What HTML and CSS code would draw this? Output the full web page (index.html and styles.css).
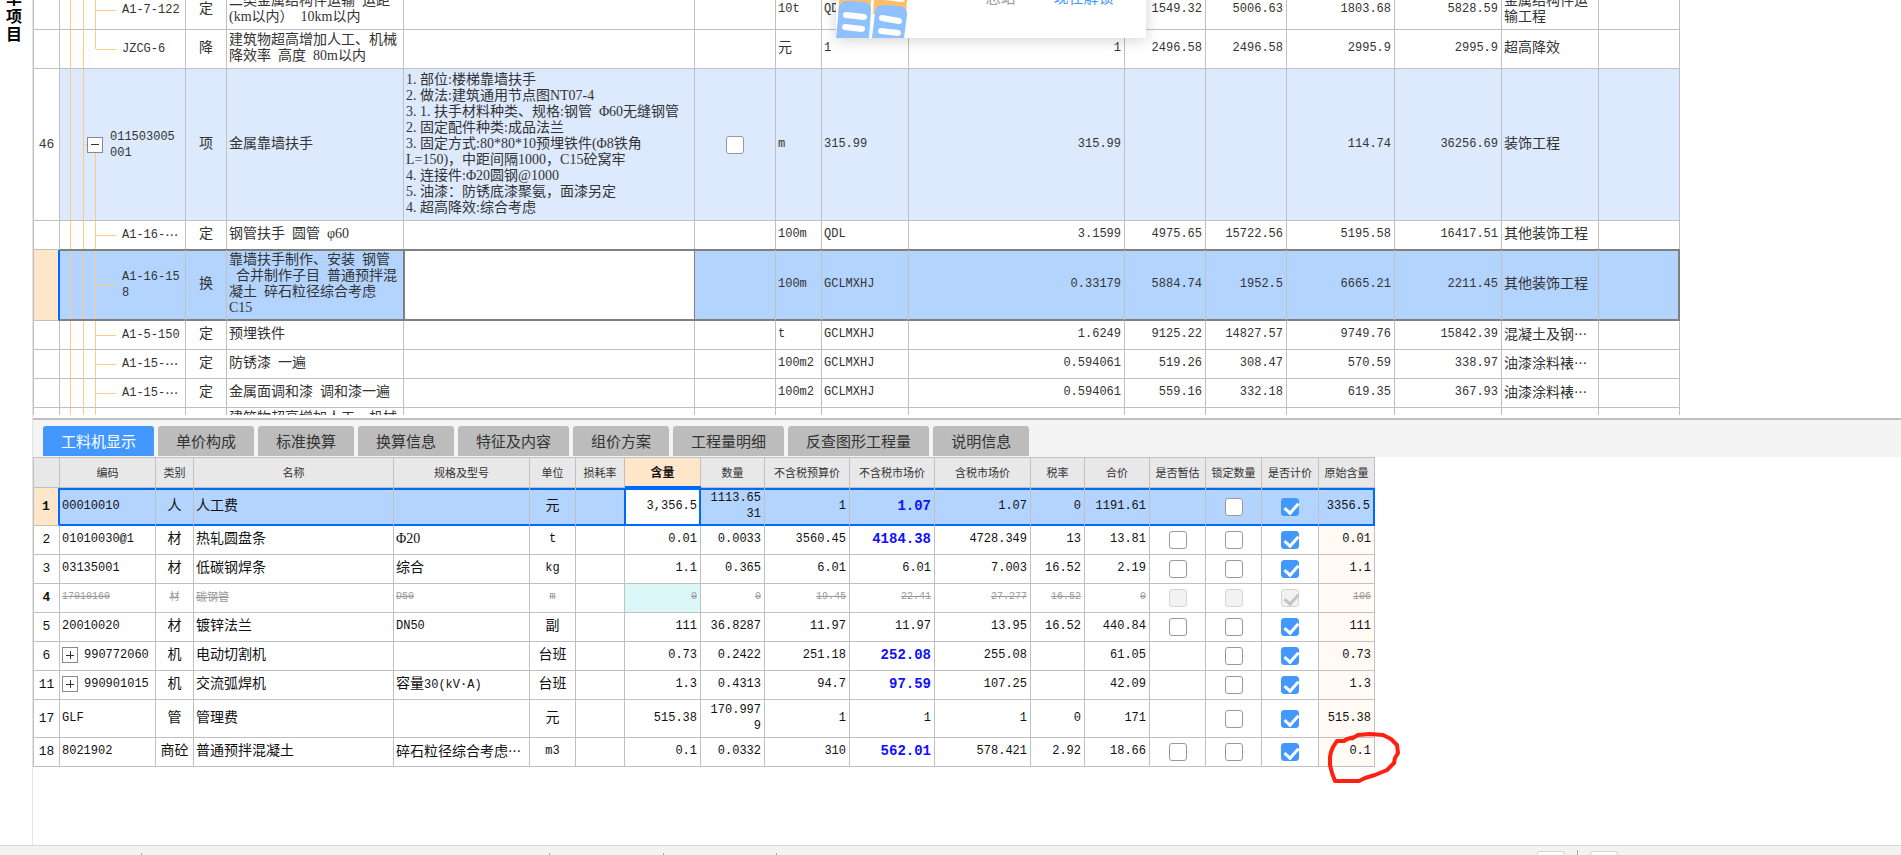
FILE: index.html
```
<!DOCTYPE html>
<html lang="zh-CN">
<head>
  <meta charset="UTF-8">
  <meta name="viewport" content="width=device-width, initial-scale=1.0">
  <title>工程计价</title>
  <link rel="stylesheet" href="styles.css">
</head>
<body>
  <div class="workspace">
    <!-- 左侧竖排导航 -->
    <aside class="side-nav"><a href="#project">单项目</a></aside>

    <main class="panes">
      <!-- 清单定额表 -->
      <section class="bill-pane">
        <table class="grid bill">
          <colgroup>
            <col class="w-27"><col class="w-126"><col class="w-41"><col class="w-177"><col class="w-291">
            <col class="w-81"><col class="w-46"><col class="w-87"><col class="w-216"><col class="w-81">
            <col class="w-81"><col class="w-108"><col class="w-107"><col class="w-97"><col class="w-81">
          </colgroup>
          <tbody>
            <tr class="h-39">
              <th></th>
              <td class="tree"><div class="leaf">A1-7-122</div></td>
              <td class="mid">定</td>
              <td>二类金属结构件运输&nbsp; 运距<br>(km以内）&nbsp; 10km以内</td>
              <td></td><td></td>
              <td class="code">10t</td><td class="code">QDL</td><td class="num"></td>
              <td class="num">1549.32</td><td class="num">5006.63</td><td class="num">1803.68</td><td class="num">5828.59</td>
              <td>金属结构件运<br>输工程</td><td></td>
            </tr>
            <tr class="h-39">
              <th></th>
              <td class="tree last"><div class="leaf">JZCG-6</div></td>
              <td class="mid">降</td>
              <td>建筑物超高增加人工、机械<br>降效率&nbsp; 高度&nbsp; 80m以内</td>
              <td></td><td></td>
              <td>元</td><td class="code">1</td><td class="num">1</td>
              <td class="num">2496.58</td><td class="num">2496.58</td><td class="num">2995.9</td><td class="num">2995.9</td>
              <td>超高降效</td><td></td>
            </tr>
            <tr class="h-152 item">
              <th>46</th>
              <td class="tree parent"><div class="node"><button class="toggle minus" aria-label="收起"></button><span>011503005<br>001</span></div></td>
              <td class="mid">项</td>
              <td>金属靠墙扶手</td>
              <td>1. 部位:楼梯靠墙扶手<br>2. 做法:建筑通用节点图NT07-4<br>3. 1. 扶手材料种类、规格:钢管&nbsp; Φ60无缝钢管<br>2. 固定配件种类:成品法兰<br>3. 固定方式:80*80*10预埋铁件(Φ8铁角<br>L=150)，中距间隔1000，C15砼窝牢<br>4. 连接件:Φ20圆钢@1000<br>5. 油漆：防锈底漆聚氨，面漆另定<br>4. 超高降效:综合考虑</td>
              <td class="mid"><input type="checkbox" aria-label="46 主要清单"></td>
              <td class="code">m</td><td class="code">315.99</td><td class="num">315.99</td>
              <td></td><td></td><td class="num">114.74</td><td class="num">36256.69</td>
              <td>装饰工程</td><td></td>
            </tr>
            <tr class="h-29">
              <th></th>
              <td class="tree"><div class="leaf">A1-16-<span class="more">…</span></div></td>
              <td class="mid">定</td>
              <td>钢管扶手&nbsp; 圆管&nbsp; φ60</td>
              <td></td><td></td>
              <td class="code">100m</td><td class="code">QDL</td><td class="num">3.1599</td>
              <td class="num">4975.65</td><td class="num">15722.56</td><td class="num">5195.58</td><td class="num">16417.51</td>
              <td>其他装饰工程</td><td></td>
            </tr>
            <tr class="h-71 current">
              <th></th>
              <td class="tree"><div class="leaf"><span>A1-16-15<br>8</span></div></td>
              <td class="mid">换</td>
              <td>靠墙扶手制作、安装&nbsp; 钢管<br>&nbsp; 合并制作子目&nbsp; 普通预拌混<br>凝土&nbsp; 碎石粒径综合考虑<br>C15</td>
              <td class="focus"></td><td></td>
              <td class="code">100m</td><td class="code">GCLMXHJ</td><td class="num">0.33179</td>
              <td class="num">5884.74</td><td class="num">1952.5</td><td class="num">6665.21</td><td class="num">2211.45</td>
              <td>其他装饰工程</td><td></td>
            </tr>
            <tr class="h-29">
              <th></th>
              <td class="tree"><div class="leaf">A1-5-150</div></td>
              <td class="mid">定</td>
              <td>预埋铁件</td>
              <td></td><td></td>
              <td class="code">t</td><td class="code">GCLMXHJ</td><td class="num">1.6249</td>
              <td class="num">9125.22</td><td class="num">14827.57</td><td class="num">9749.76</td><td class="num">15842.39</td>
              <td>混凝土及钢<span class="more">…</span></td><td></td>
            </tr>
            <tr class="h-29">
              <th></th>
              <td class="tree"><div class="leaf">A1-15-<span class="more">…</span></div></td>
              <td class="mid">定</td>
              <td>防锈漆&nbsp; 一遍</td>
              <td></td><td></td>
              <td class="code">100m2</td><td class="code">GCLMXHJ</td><td class="num">0.594061</td>
              <td class="num">519.26</td><td class="num">308.47</td><td class="num">570.59</td><td class="num">338.97</td>
              <td>油漆涂料裱<span class="more">…</span></td><td></td>
            </tr>
            <tr class="h-29">
              <th></th>
              <td class="tree"><div class="leaf">A1-15-<span class="more">…</span></div></td>
              <td class="mid">定</td>
              <td>金属面调和漆&nbsp; 调和漆一遍</td>
              <td></td><td></td>
              <td class="code">100m2</td><td class="code">GCLMXHJ</td><td class="num">0.594061</td>
              <td class="num">559.16</td><td class="num">332.18</td><td class="num">619.35</td><td class="num">367.93</td>
              <td>油漆涂料裱<span class="more">…</span></td><td></td>
            </tr>
            <tr class="h-39">
              <th></th>
              <td class="tree"></td>
              <td></td>
              <td>建筑物超高增加人工、机械<br>降效率&nbsp; 高度&nbsp; 80m以内</td>
              <td></td><td></td><td></td><td></td><td></td><td></td><td></td><td></td><td></td><td></td><td></td>
            </tr>
          </tbody>
        </table>
      </section>

      <!-- 工料机明细 -->
      <section class="detail-pane">
        <nav class="tabs">
          <button class="tab active">工料机显示</button>
          <button class="tab">单价构成</button>
          <button class="tab">标准换算</button>
          <button class="tab">换算信息</button>
          <button class="tab">特征及内容</button>
          <button class="tab">组价方案</button>
          <button class="tab">工程量明细</button>
          <button class="tab">反查图形工程量</button>
          <button class="tab">说明信息</button>
        </nav>
        <table class="grid detail">
          <colgroup>
            <col class="w-27"><col class="w-96"><col class="w-38"><col class="w-200"><col class="w-136"><col class="w-46">
            <col class="w-49"><col class="w-76"><col class="w-64"><col class="w-85"><col class="w-85"><col class="w-96">
            <col class="w-54"><col class="w-65"><col class="w-56"><col class="w-56"><col class="w-57"><col class="w-56">
          </colgroup>
          <thead>
            <tr>
              <th></th><th>编码</th><th>类别</th><th>名称</th><th>规格及型号</th><th>单位</th><th>损耗率</th>
              <th class="sorted">含量</th><th>数量</th><th>不含税预算价</th><th>不含税市场价</th><th>含税市场价</th>
              <th>税率</th><th>合价</th><th>是否暂估</th><th>锁定数量</th><th>是否计价</th><th>原始含量</th>
            </tr>
          </thead>
          <tbody>
            <tr class="h-38 active-row">
              <th>1</th><td class="code">00010010</td><td class="mid">人</td><td>人工费</td><td></td><td class="mid">元</td><td></td>
              <td class="edit"><input class="cell-input" type="text" value="3,356.5" aria-label="含量"></td>
              <td class="num">1113.65<br>31</td><td class="num">1</td><td class="num price">1.07</td><td class="num">1.07</td><td class="num">0</td><td class="num">1191.61</td>
              <td></td>
              <td class="mid"><input type="checkbox" aria-label="锁定数量"></td>
              <td class="mid"><input type="checkbox" aria-label="是否计价" checked></td>
              <td class="num origin">3356.5</td>
            </tr>
            <tr class="h-29">
              <th>2</th><td class="code">01010030@1</td><td class="mid">材</td><td>热轧圆盘条</td><td>Φ20</td><td class="mid code">t</td><td></td>
              <td class="num">0.01</td><td class="num">0.0033</td><td class="num">3560.45</td><td class="num price">4184.38</td><td class="num">4728.349</td><td class="num">13</td><td class="num">13.81</td>
              <td class="mid"><input type="checkbox" aria-label="是否暂估"></td>
              <td class="mid"><input type="checkbox" aria-label="锁定数量"></td>
              <td class="mid"><input type="checkbox" aria-label="是否计价" checked></td>
              <td class="num origin">0.01</td>
            </tr>
            <tr class="h-29">
              <th>3</th><td class="code">03135001</td><td class="mid">材</td><td>低碳钢焊条</td><td>综合</td><td class="mid code">kg</td><td></td>
              <td class="num">1.1</td><td class="num">0.365</td><td class="num">6.01</td><td class="num">6.01</td><td class="num">7.003</td><td class="num">16.52</td><td class="num">2.19</td>
              <td class="mid"><input type="checkbox" aria-label="是否暂估"></td>
              <td class="mid"><input type="checkbox" aria-label="锁定数量"></td>
              <td class="mid"><input type="checkbox" aria-label="是否计价" checked></td>
              <td class="num origin">1.1</td>
            </tr>
            <tr class="h-29 removed">
              <th>4</th><td class="code">17010160</td><td class="mid">材</td><td>碳钢管</td><td class="code">D50</td><td class="mid code">m</td><td></td>
              <td class="num changed">0</td><td class="num">0</td><td class="num">19.45</td><td class="num">22.41</td><td class="num">27.277</td><td class="num">16.52</td><td class="num">0</td>
              <td class="mid"><input type="checkbox" aria-label="是否暂估" disabled></td>
              <td class="mid"><input type="checkbox" aria-label="锁定数量" disabled></td>
              <td class="mid"><input type="checkbox" aria-label="是否计价" checked disabled></td>
              <td class="num origin">106</td>
            </tr>
            <tr class="h-29">
              <th>5</th><td class="code">20010020</td><td class="mid">材</td><td>镀锌法兰</td><td class="code">DN50</td><td class="mid">副</td><td></td>
              <td class="num">111</td><td class="num">36.8287</td><td class="num">11.97</td><td class="num">11.97</td><td class="num">13.95</td><td class="num">16.52</td><td class="num">440.84</td>
              <td class="mid"><input type="checkbox" aria-label="是否暂估"></td>
              <td class="mid"><input type="checkbox" aria-label="锁定数量"></td>
              <td class="mid"><input type="checkbox" aria-label="是否计价" checked></td>
              <td class="num origin">111</td>
            </tr>
            <tr class="h-29">
              <th>6</th><td class="code"><div class="expand"><button class="toggle plus" aria-label="展开"></button>990772060</div></td><td class="mid">机</td><td>电动切割机</td><td></td><td class="mid">台班</td><td></td>
              <td class="num">0.73</td><td class="num">0.2422</td><td class="num">251.18</td><td class="num price">252.08</td><td class="num">255.08</td><td></td><td class="num">61.05</td>
              <td></td>
              <td class="mid"><input type="checkbox" aria-label="锁定数量"></td>
              <td class="mid"><input type="checkbox" aria-label="是否计价" checked></td>
              <td class="num origin">0.73</td>
            </tr>
            <tr class="h-29">
              <th>11</th><td class="code"><div class="expand"><button class="toggle plus" aria-label="展开"></button>990901015</div></td><td class="mid">机</td><td>交流弧焊机</td><td>容量<span class="code">30(kV·A)</span></td><td class="mid">台班</td><td></td>
              <td class="num">1.3</td><td class="num">0.4313</td><td class="num">94.7</td><td class="num price">97.59</td><td class="num">107.25</td><td></td><td class="num">42.09</td>
              <td></td>
              <td class="mid"><input type="checkbox" aria-label="锁定数量"></td>
              <td class="mid"><input type="checkbox" aria-label="是否计价" checked></td>
              <td class="num origin">1.3</td>
            </tr>
            <tr class="h-38">
              <th>17</th><td class="code">GLF</td><td class="mid">管</td><td>管理费</td><td></td><td class="mid">元</td><td></td>
              <td class="num">515.38</td><td class="num">170.997<br>9</td><td class="num">1</td><td class="num">1</td><td class="num">1</td><td class="num">0</td><td class="num">171</td>
              <td></td>
              <td class="mid"><input type="checkbox" aria-label="锁定数量"></td>
              <td class="mid"><input type="checkbox" aria-label="是否计价" checked></td>
              <td class="num origin">515.38</td>
            </tr>
            <tr class="h-29">
              <th>18</th><td class="code">8021902</td><td class="mid">商砼</td><td>普通预拌混凝土</td><td>碎石粒径综合考虑<span class="more">…</span></td><td class="mid code">m3</td><td></td>
              <td class="num">0.1</td><td class="num">0.0332</td><td class="num">310</td><td class="num price">562.01</td><td class="num">578.421</td><td class="num">2.92</td><td class="num">18.66</td>
              <td class="mid"><input type="checkbox" aria-label="是否暂估"></td>
              <td class="mid"><input type="checkbox" aria-label="锁定数量"></td>
              <td class="mid"><input type="checkbox" aria-label="是否计价" checked></td>
              <td class="num origin marked">0.1
                <svg class="red-mark" width="74" height="54" viewBox="0 0 74 54">
                  <path d="M28 6 L20 8 L17 10 L10 10 L6 16 L4 21 L3 26 L3 34 L5 42 L8 50 L32 50 L38 47 L48 44 L60 39 L67 32 L68 27 L71 22 L70 14 L64 8 L56 4 L43 3 L31 4 L24 8" />
                </svg>
              </td>
            </tr>
          </tbody>
        </table>
      </section>
    </main>
  </div>

  <!-- 底部状态栏 -->
  <footer class="status-bar">
    <span class="seg w-142"></span><span class="seg w-408"></span><span class="seg w-114"></span><span class="seg w-113"></span>
    <div class="zoom-tools">
      <button aria-label="缩小"></button><i></i><button aria-label="放大"></button>
    </div>
  </footer>

  <!-- 顶部提示弹层 -->
  <div class="popup">
    <svg width="72" height="60" viewBox="0 0 72 60">
      <path class="folder-back" d="M5 0 H73 L70 36 L2 36 Z" />
      <path class="gap" d="M38 0 L34 60" />
      <path class="folder" d="M3 30 Q4 23 11 23 L28 24 Q36 25 35 33 L33 60 H0 Z" />
      <path class="folder" d="M39 34 Q40 27 47 27 L63 28 Q72 29 71 37 L68 60 H36 Z" />
      <path class="lines" d="M10 37 L28 39 M9 49 L26 51 M46 40 L63 43 M45 53 L62 55 M50 19 L66 21" />
    </svg>
    <span>总站</span>
    <a href="#unlock">现在解锁</a>
  </div>
</body>
</html>
```
FILE: styles.css
```
* {
  box-sizing: border-box;
}

html, body {
  height: 100%;
  margin: 0;
}

body {
  display: flex;
  flex-direction: column;
  position: relative;
  overflow: hidden;
  background: #fff;
  color: #333;
  font: 14px/16px "Liberation Serif", "Noto Sans CJK SC", serif;
}

button {
  padding: 0;
  border: none;
}

.workspace {
  flex: 1;
  display: flex;
  min-height: 0;
}

/* 左侧导航 */
.side-nav {
  width: 33px;
  flex: none;
  display: flex;
  justify-content: center;
  border-right: 1px solid #e3e3e3;
}

.side-nav a {
  width: 16px;
  margin-top: -12px;
  margin-right: 4px;
  color: #000;
  font: bold 16px/18px "Noto Sans CJK SC", sans-serif;
  text-decoration: none;
}

.panes {
  flex: 1;
  display: flex;
  flex-direction: column;
  min-width: 0;
}

.bill-pane {
  flex: 415;
  min-height: 0;
  overflow: hidden;
  border-bottom: 3px solid #fff;
}

.detail-pane {
  flex: 427;
  min-height: 0;
}

/* 表格 */
.grid {
  table-layout: fixed;
  width: 0;
  border-collapse: separate;
  border-spacing: 0;
}

.grid th, .grid td {
  padding: 0 3px 2px 2px;
  border-right: 1px solid #c0c0c0;
  border-bottom: 1px solid #c0c0c0;
  text-align: left;
  white-space: nowrap;
}

.grid th:first-child {
  padding: 0;
  border-left: 1px solid #c0c0c0;
  text-align: center;
  font: 13px/16px "Liberation Mono", monospace;
}

.bill {
  margin-top: -9px;
}

.detail {
  color: #111;
}

.grid td.mid {
  padding: 0 0 2px;
  text-align: center;
}

.grid td.num {
  text-align: right;
}

.grid .num, .grid .code, .tree {
  font-family: "Liberation Mono", "Noto Sans CJK SC", monospace;
  font-size: 12px;
}

.more {
  font: 13px/16px "Noto Sans CJK SC", sans-serif;
}

.h-29 { height: 29px; }
.h-38 { height: 38px; }
.h-39 { height: 39px; }
.h-71 { height: 71px; }
.h-152 { height: 152px; }

.w-27 { width: 27px; }
.w-38 { width: 38px; }
.w-41 { width: 41px; }
.w-46 { width: 46px; }
.w-49 { width: 49px; }
.w-54 { width: 54px; }
.w-56 { width: 56px; }
.w-57 { width: 57px; }
.w-64 { width: 64px; }
.w-65 { width: 65px; }
.w-76 { width: 76px; }
.w-81 { width: 81px; }
.w-85 { width: 85px; }
.w-87 { width: 87px; }
.w-96 { width: 96px; }
.w-97 { width: 97px; }
.w-107 { width: 107px; }
.w-108 { width: 108px; }
.w-113 { width: 113px; }
.w-114 { width: 114px; }
.w-126 { width: 126px; }
.w-136 { width: 136px; }
.w-142 { width: 142px; }
.w-177 { width: 177px; }
.w-200 { width: 200px; }
.w-216 { width: 216px; }
.w-291 { width: 291px; }
.w-408 { width: 408px; }

/* 树形连线 */
.grid td.tree {
  padding: 0;
  background-image: linear-gradient(#fdca86, #fdca86), linear-gradient(#fdca86, #fdca86), linear-gradient(#fdca86, #fdca86);
  background-repeat: no-repeat;
  background-position: 10px 0, 23px 0, 35px 0;
  background-size: 1px 100%, 1px 100%, 1px 100%;
}

.grid td.tree.last {
  background-size: 1px 100%, 1px 100%, 1px 50%;
}

.grid td.tree.parent {
  background-position: 10px 0, 23px 0, 35px 100%;
  background-size: 1px 100%, 1px 100%, 1px 50%;
}

.leaf, .node, .expand {
  display: flex;
  align-items: center;
}

.leaf::before {
  content: '';
  width: 20px;
  height: 1px;
  margin: 0 6px 0 36px;
  background: #fdca86;
}

.node::before {
  content: '';
  width: 3px;
  height: 1px;
  margin-left: 24px;
  background: #fdca86;
}

.node span {
  margin-left: 7px;
}

.expand {
  gap: 6px;
}

.toggle {
  flex: none;
  width: 16px;
  height: 16px;
  border: 1px solid #888;
  background: linear-gradient(#333, #333) center / 8px 1px no-repeat #fff;
}

.toggle.plus {
  background: linear-gradient(#333, #333) center / 8px 1px no-repeat,
    linear-gradient(#333, #333) center / 1px 8px no-repeat #fff;
}

/* 行状态 */
.item td {
  background-color: #dde9fd;
}

.current td {
  background-color: #b3d4ff;
  border-bottom-color: #808080;
  box-shadow: inset 0 1px 0 #808080, 0 -1px 0 #808080, inset 0 -1px 0 #808080;
}

.current td:last-child {
  border-right: 2px solid #808080;
}

.current td.focus {
  background-color: #fff;
  border-right-color: #808080;
  box-shadow: inset 0 1px 0 #808080, 0 -1px 0 #808080, inset 0 -1px 0 #808080, inset 1px 0 0 #808080, -1px 0 0 #808080;
}

.grid .current th, .grid .active-row th {
  background: #fee6c8;
  border-right: 2px solid #006aff;
}

.grid .active-row th {
  font-weight: bold;
}

.active-row td {
  background: #b3d4ff;
  border-bottom-color: #006aff;
  box-shadow: inset 0 2px 0 #006aff, inset 0 -1px 0 #006aff;
}

.active-row td:last-child {
  border-right: 2px solid #006aff;
}

.grid .active-row .edit {
  padding: 0 0 2px;
  background: #fff;
  border-right: 2px solid #006aff;
  box-shadow: inset 0 2px 0 #006aff, inset 0 -1px 0 #006aff, -1px 0 0 #006aff, inset 1px 0 0 #006aff, 0 -2px 0 #006aff;
}

.cell-input {
  display: block;
  width: 100%;
  padding: 0 2px 0 4px;
  border: none;
  outline: none;
  background: transparent;
  color: #111;
  font: 12px/16px "Liberation Mono", monospace;
  text-align: right;
}

.detail .price {
  color: #1010ff;
  font-weight: bold;
  font-size: 14px;
}

.detail tr:not(.active-row) .origin {
  background: #fffaf3;
}

.detail .removed td {
  color: #999;
  font-size: 10px;
  text-decoration: line-through;
}

.detail .removed td:nth-child(4) {
  font-size: 11px;
}

.grid .removed th:first-child {
  font-weight: bold;
}

.removed .changed {
  background: #dcf7f7;
}

/* 表头 */
.detail thead tr {
  height: 31px;
}

.detail thead th {
  padding: 0 0 2px;
  border-top: 1px solid #c0c0c0;
  background: #e8e8e8;
  color: #333;
  font: 11px/16px "Noto Sans CJK SC", sans-serif;
  text-align: center;
}

.detail thead .sorted {
  background: #fee6c8;
  color: #111;
  font-size: 12px;
  font-weight: bold;
}

/* 复选框 */
input[type="checkbox"] {
  appearance: none;
  display: block;
  position: relative;
  width: 18px;
  height: 18px;
  margin: 2px auto 0;
  border: 1px solid #999;
  border-radius: 3px;
  background: #fff;
}

input[type="checkbox"]:checked {
  border-color: #4398ff;
  background: #4398ff;
}

input[type="checkbox"]:checked::before {
  content: '';
  position: absolute;
  left: 5px;
  top: 1px;
  width: 6px;
  height: 11px;
  border: solid #fff;
  border-width: 0 3px 3px 0;
  transform: rotate(42deg);
}

input[type="checkbox"]:disabled {
  border-color: #d4d4d4;
  background: #f2f2f2;
}

input[type="checkbox"]:disabled::before {
  border-color: #c4c4c4;
}

/* 页签 */
.tabs {
  display: flex;
  align-items: flex-end;
  gap: 4px;
  height: 39px;
  padding: 0 10px 1px;
  border-top: 2px solid #bfbfbf;
  background: #f4f4f4;
}

.tab {
  height: 30px;
  padding: 0 18px;
  border-radius: 3px 3px 0 0;
  background: #bcbcbc;
  color: #333;
  font: 15px/30px "Noto Sans CJK SC", sans-serif;
}

.tab.active {
  background: #4398ff;
  color: #fff;
}

/* 手绘红圈 */
.marked {
  position: relative;
}

.red-mark {
  position: absolute;
  left: 8px;
  top: -7px;
  fill: none;
  stroke: #ff2010;
  stroke-width: 4;
  stroke-linejoin: round;
}

/* 状态栏 */
.status-bar {
  display: flex;
  flex: none;
  height: 10px;
  padding-right: 283px;
  border-top: 1px solid #d8d8d8;
  background: #f3f3f3;
}

.seg {
  height: 2px;
  align-self: flex-end;
  border-right: 1px solid #aaa;
}

.zoom-tools {
  display: flex;
  align-items: flex-end;
  gap: 12px;
  margin-left: auto;
}

.zoom-tools button {
  width: 28px;
  height: 4px;
  border: 1px solid #d8d8d8;
  border-bottom: none;
  border-radius: 3px 3px 0 0;
  background: #fff;
}

.zoom-tools i {
  width: 1px;
  height: 5px;
  background: #aaa;
}

/* 弹层 */
.popup {
  position: absolute;
  top: -22px;
  left: 44%;
  display: flex;
  width: 310px;
  height: 60px;
  background: #fff;
  box-shadow: 0 2px 14px rgba(0, 0, 0, 0.18);
  color: #999;
  font: 15px/38px "Noto Sans CJK SC", sans-serif;
}

.popup span {
  margin: 0 38px 0 77px;
}

.popup a {
  color: #4398ff;
  text-decoration: none;
}

.folder-back { fill: #ffbe69; }
.folder { fill: #8fc1ff; }

.gap {
  fill: none;
  stroke: #fff;
  stroke-width: 3;
}

.lines {
  fill: none;
  stroke: #fff;
  stroke-width: 6;
  stroke-linecap: round;
}
```
